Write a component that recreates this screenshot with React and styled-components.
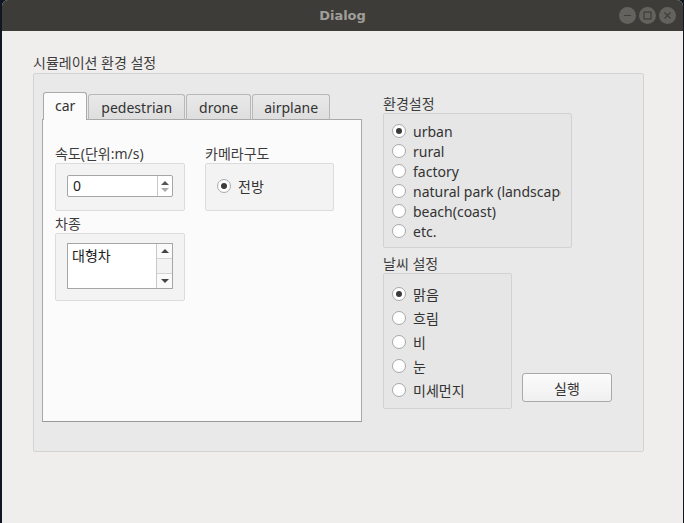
import React from "react";
import styled, { createGlobalStyle } from "styled-components";

const Global = createGlobalStyle`
  html, body {
    margin: 0;
    padding: 0;
    background: #0f1822;
  }
  body {
    font-family: "Noto Sans", "Noto Sans CJK KR", sans-serif;
    font-size: 14px;
    color: #3c3c3c;
  }
`;

const Window = styled.div`
  margin: 0 1px 0 2px;
  height: 523px;
  display: flex;
  flex-direction: column;
  background: #efeeec;
  border-radius: 6px 6px 0 0;
  overflow: hidden;
`;

const TitleBar = styled.div`
  height: 31px;
  flex: none;
  background: #3d3c38;
  display: flex;
  align-items: center;
  justify-content: center;
  position: relative;
`;

const Title = styled.span`
  color: #a09f9a;
  font-family: "DejaVu Sans", sans-serif;
  font-weight: bold;
  font-size: 13px;
`;

const WinButtons = styled.div`
  position: absolute;
  right: 7px;
  top: 7px;
  display: flex;
  gap: 3px;
`;

const WinButton = styled.div`
  width: 17px;
  height: 17px;
  border-radius: 50%;
  background: #63625d;
  display: grid;
  place-items: center;
`;

const Content = styled.div`
  padding: 23px 39px 0 31px;
`;

const Label = styled.div`
  height: 18px;
  line-height: 18px;
  white-space: nowrap;
`;

const MainGroup = styled.div`
  margin-top: 1px;
  height: 379px;
  box-sizing: border-box;
  border: 1px solid #d3d3d1;
  border-radius: 2px;
  background: #e9e9e9;
  padding: 18px 0 0 8px;
  display: flex;
  gap: 21px;
`;

const TabWidget = styled.div`
  width: 320px;
  display: flex;
  flex-direction: column;
`;

const TabBar = styled.div`
  display: flex;
  align-items: flex-end;
  height: 28px;
  padding-left: 1px;
  position: relative;
  z-index: 1;
  margin-bottom: -1px;
`;

const Tab = styled.div`
  height: ${(p) => (p.$active ? "28px" : "26px")};
  box-sizing: border-box;
  padding: 0 ${(p) => p.$pad}px;
  margin-right: 1px;
  display: flex;
  align-items: center;
  justify-content: center;
  border: 1px solid ${(p) => (p.$active ? "#a9a9a9" : "#b8b8b8")};
  border-bottom: ${(p) => (p.$active ? "none" : "1px solid #a9a9a9")};
  border-radius: 3px 3px 0 0;
  background: ${(p) =>
    p.$active ? "#fcfbfc" : "linear-gradient(#e9e9e9, #dedede)"};
  color: #333;
  font-size: 14px;
  padding-bottom: ${(p) => (p.$active ? "2px" : "0")};
`;

const TabPane = styled.div`
  height: 303px;
  box-sizing: border-box;
  background: #fcfbfc;
  border: 1px solid #a9a9a9;
  border-bottom-color: #999;
  padding: 25px 0 0 12px;
  display: grid;
  grid-template-columns: 130px 129px;
  grid-auto-rows: min-content;
  column-gap: 20px;
  row-gap: 4px;
`;

const Field = styled.div`
  display: flex;
  flex-direction: column;
`;

const FieldLabel = styled(Label)`
  margin-top: ${(p) => p.$top || 0}px;
`;

const InnerBox = styled.div`
  box-sizing: border-box;
  width: ${(p) => p.$w}px;
  height: ${(p) => p.$h}px;
  border: 1px solid ${(p) => p.$line || "#dcdcdc"};
  border-radius: 2px;
  background: ${(p) => p.$bg || "#f4f3f4"};
  padding: ${(p) => p.$pad || "11px 0 0 11px"};
`;

const SpinBox = styled.div`
  width: 106px;
  height: 22px;
  box-sizing: border-box;
  border: 1px solid #a6a6a6;
  border-radius: 2px;
  background: #fff;
  display: flex;
`;

const SpinValue = styled.div`
  flex: 1;
  padding-left: 5px;
  line-height: 20px;
  color: #222;
`;

const SpinArrows = styled.div`
  width: 14px;
  border-left: 1px solid #c8c8c8;
  display: flex;
  flex-direction: column;
  align-items: center;
  justify-content: center;
  gap: 3px;
`;

const Arrow = styled.div`
  width: 0;
  height: 0;
  border-left: 4px solid transparent;
  border-right: 4px solid transparent;
  ${(p) =>
    p.$down
      ? `border-top: 4px solid ${p.$color || "#555"};`
      : `border-bottom: 4px solid ${p.$color || "#555"};`}
`;

const ListBox = styled.div`
  width: 106px;
  height: 46px;
  box-sizing: border-box;
  border: 1px solid #a6a6a6;
  background: #fff;
  display: flex;
`;

const ListItems = styled.div`
  flex: 1;
  padding: 2px 0 0 4px;
  line-height: 20px;
  color: #222;
`;

const ScrollBar = styled.div`
  width: 15px;
  border-left: 1px solid #c8c8c8;
  background: #f3f3f3;
  display: flex;
  flex-direction: column;
  justify-content: space-between;
`;

const ScrollBtn = styled.div`
  height: 14px;
  display: grid;
  place-items: center;
  background: #fafafa;
  border-${(p) => (p.$down ? "top" : "bottom")}: 1px solid #d4d4d4;
`;

const RightCol = styled.div`
  display: flex;
  flex-direction: column;
  padding-top: 3px;
`;

const RadioList = styled.div`
  display: flex;
  flex-direction: column;
  gap: ${(p) => p.$gap}px;
`;

const RadioRow = styled.div`
  display: flex;
  align-items: center;
  gap: 7px;
  height: 20px;
  white-space: nowrap;
  overflow: hidden;
  color: #333;
`;

const RadioCircle = styled.span`
  flex: none;
  width: 14px;
  height: 14px;
  box-sizing: border-box;
  border-radius: 50%;
  border: 1px solid #a8a8a8;
  background: #fff;
  display: grid;
  place-items: center;
  &::after {
    content: "";
    width: 6px;
    height: 6px;
    border-radius: 50%;
    background: ${(p) => (p.$checked ? "#3b3b3b" : "transparent")};
  }
`;

const WeatherRow = styled.div`
  display: flex;
  align-items: flex-end;
  gap: 10px;
`;

const Button = styled.div`
  width: 90px;
  height: 29px;
  box-sizing: border-box;
  margin-bottom: 7px;
  border: 1px solid #a9a9a9;
  border-radius: 3px;
  background: linear-gradient(#fbfbfb, #f0f0f0);
  display: grid;
  place-items: center;
  color: #333;
`;

function Radio({ label, checked }) {
  return (
    <RadioRow>
      <RadioCircle $checked={checked} />
      {label}
    </RadioRow>
  );
}

const tabs = [
  { name: "car", pad: 11, active: true },
  { name: "pedestrian", pad: 12 },
  { name: "drone", pad: 12 },
  { name: "airplane", pad: 11 },
];

const environments = ["urban", "rural", "factory", "natural park (landscape)", "beach(coast)", "etc."];
const weathers = ["맑음", "흐림", "비", "눈", "미세먼지"];

export default function App() {
  return (
    <>
      <Global />
      <Window>
        <TitleBar>
          <Title>Dialog</Title>
          <WinButtons>
            <WinButton>
              <svg width="9" height="9" viewBox="0 0 9 9">
                <path d="M1 4.5h7" stroke="#3f3e3a" strokeWidth="1.2" />
              </svg>
            </WinButton>
            <WinButton>
              <svg width="9" height="9" viewBox="0 0 9 9">
                <rect x="1" y="1" width="7" height="7" fill="none" stroke="#3f3e3a" strokeWidth="1.2" />
              </svg>
            </WinButton>
            <WinButton>
              <svg width="9" height="9" viewBox="0 0 9 9">
                <path d="M1.5 1.5l6 6M7.5 1.5l-6 6" stroke="#3f3e3a" strokeWidth="1.2" />
              </svg>
            </WinButton>
          </WinButtons>
        </TitleBar>
        <Content>
          <Label>시뮬레이션 환경 설정</Label>
          <MainGroup>
            <TabWidget>
              <TabBar>
                {tabs.map((t) => (
                  <Tab key={t.name} $active={t.active} $pad={t.pad}>
                    {t.name}
                  </Tab>
                ))}
              </TabBar>
              <TabPane>
                <Field>
                  <FieldLabel>속도(단위:m/s)</FieldLabel>
                  <InnerBox $h={48}>
                    <SpinBox>
                      <SpinValue>0</SpinValue>
                      <SpinArrows>
                        <Arrow $color="#555" />
                        <Arrow $down $color="#aaa" />
                      </SpinArrows>
                    </SpinBox>
                  </InnerBox>
                </Field>
                <Field>
                  <FieldLabel>카메라구도</FieldLabel>
                  <InnerBox $h={48} $pad="12px 0 0 11px">
                    <Radio label="전방" checked />
                  </InnerBox>
                </Field>
                <Field>
                  <FieldLabel>차종</FieldLabel>
                  <InnerBox $h={68} $pad="9px 0 0 11px">
                    <ListBox>
                      <ListItems>대형차</ListItems>
                      <ScrollBar>
                        <ScrollBtn>
                          <Arrow $color="#444" />
                        </ScrollBtn>
                        <ScrollBtn $down>
                          <Arrow $down $color="#444" />
                        </ScrollBtn>
                      </ScrollBar>
                    </ListBox>
                  </InnerBox>
                </Field>
              </TabPane>
            </TabWidget>
            <RightCol>
              <FieldLabel>환경설정</FieldLabel>
              <InnerBox $w={189} $h={135} $bg="#e6e6e6" $line="#d2d2d2" $pad="7px 10px 0 8px">
                <RadioList $gap={0}>
                  {environments.map((e, i) => (
                    <Radio key={e} label={e} checked={i === 0} />
                  ))}
                </RadioList>
              </InnerBox>
              <FieldLabel $top={7}>날씨 설정</FieldLabel>
              <WeatherRow>
                <InnerBox $w={129} $h={136} $bg="#e6e6e6" $line="#d2d2d2" $pad="10px 0 0 8px">
                  <RadioList $gap={4}>
                    {weathers.map((w, i) => (
                      <Radio key={w} label={w} checked={i === 0} />
                    ))}
                  </RadioList>
                </InnerBox>
                <Button>실행</Button>
              </WeatherRow>
            </RightCol>
          </MainGroup>
        </Content>
      </Window>
    </>
  );
}
